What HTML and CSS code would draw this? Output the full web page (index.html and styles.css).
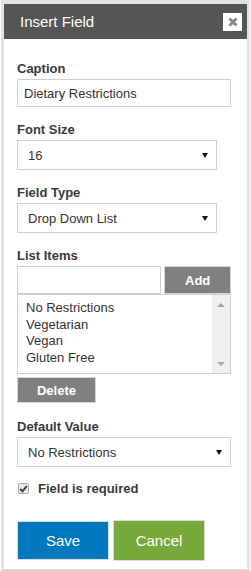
FILE: index.html
```html
<!DOCTYPE html>
<html>
<head>
<meta charset="utf-8">
<link rel="stylesheet" href="styles.css">
</head>
<body>
<div class="dialog">
  <div class="header">
    <span class="title">Insert Field</span>
    <span class="close"><svg width="10" height="10" viewBox="0 0 10 10"><path d="M1.5 1.5 L8.5 8.5 M8.5 1.5 L1.5 8.5" stroke="#8a8a8a" stroke-width="3"/></svg></span>
  </div>
  <div class="body">
    <div class="label first">Caption</div>
    <div class="input wide">Dietary Restrictions</div>

    <div class="label">Font Size</div>
    <div class="select narrow"><span>16</span><svg class="arrow" width="6" height="5" viewBox="0 0 6 5"><path d="M0 0 L6 0 L3 5 Z" fill="#111"/></svg></div>

    <div class="label">Field Type</div>
    <div class="select narrow"><span>Drop Down List</span><svg class="arrow" width="6" height="5" viewBox="0 0 6 5"><path d="M0 0 L6 0 L3 5 Z" fill="#111"/></svg></div>

    <div class="label">List Items</div>
    <div class="add-row">
      <div class="input item-input"></div>
      <div class="btn-gray add">Add</div>
    </div>
    <div class="listbox">
      <div class="items">
        <div>No Restrictions</div>
        <div>Vegetarian</div>
        <div>Vegan</div>
        <div>Gluten Free</div>
      </div>
      <div class="scroll">
        <svg width="8" height="4" viewBox="0 0 8 4"><path d="M0 4 L4 0 L8 4 Z" fill="#a8a8a8"/></svg>
        <svg width="8" height="4" viewBox="0 0 8 4"><path d="M0 0 L4 4 L8 0 Z" fill="#a8a8a8"/></svg>
      </div>
    </div>
    <div class="btn-gray delete">Delete</div>

    <div class="label">Default Value</div>
    <div class="select wide"><span>No Restrictions</span><svg class="arrow" width="6" height="5" viewBox="0 0 6 5"><path d="M0 0 L6 0 L3 5 Z" fill="#111"/></svg></div>

    <div class="check-row">
      <span class="checkbox"><svg width="9" height="8" viewBox="0 0 9 8"><path d="M1.2 4 L3.5 6.3 L7.8 1.2" stroke="#444" stroke-width="2" fill="none"/></svg></span>
      <span class="check-label">Field is required</span>
    </div>

    <div class="actions">
      <div class="btn save">Save</div>
      <div class="btn cancel">Cancel</div>
    </div>
  </div>
</div>
</body>
</html>
```
FILE: styles.css
```css
html, body {
  margin: 0;
  padding: 0;
  background: #ffffff;
}
body {
  font-family: "Liberation Sans", Arial, sans-serif;
  color: #333;
}
.dialog {
  width: 249px;
  height: 571px;
  box-sizing: border-box;
  margin-left: 1px;
  border: 3px solid #e2e2e2;
  border-top-width: 4px;
  border-bottom: 2px solid #d8d8d8;
  background: #fff;
}
.header {
  height: 35px;
  background: #555555;
  display: flex;
  align-items: center;
  justify-content: space-between;
  padding: 0 5px 0 16px;
}
.title {
  color: #fff;
  font-size: 15px;
}
.close {
  width: 19px;
  height: 18px;
  background: #fff;
  display: flex;
  align-items: center;
  justify-content: center;
}
.body {
  padding: 0 15px 0 13px;
}
.label {
  font-size: 13px;
  font-weight: bold;
  color: #3a3a3a;
  margin-top: 15px;
  margin-bottom: 3px;
  line-height: 15px;
}
.label.first {
  margin-top: 22px;
}
.input, .select {
  box-sizing: border-box;
  border: 1px solid #cfcfcf;
  height: 28px;
  font-size: 13px;
  display: flex;
  align-items: center;
  padding-left: 6px;
  color: #333;
}
.wide { width: 214px; }
.narrow { width: 200px; }
.select {
  justify-content: space-between;
  padding-left: 10px;
  padding-right: 8px;
  height: 30px;
}
.add-row {
  display: flex;
  gap: 3px;
  width: 214px;
}
.item-input {
  width: 145px;
  height: 28px;
}
.btn-gray {
  background: #808080;
  color: #fff;
  font-weight: bold;
  font-size: 13px;
  display: flex;
  align-items: center;
  justify-content: center;
  box-sizing: border-box;
  border: 1px solid #d6d6d6;
}
.add {
  width: 67px;
  height: 28px;
}
.listbox {
  box-sizing: border-box;
  width: 214px;
  height: 80px;
  border: 1px solid #cfcfcf;
  display: flex;
  justify-content: space-between;
}
.items {
  padding: 5px 0 0 8px;
  font-size: 13px;
  line-height: 16.5px;
  color: #333;
}
.scroll {
  width: 18px;
  background: #f0f0f0;
  display: flex;
  flex-direction: column;
  justify-content: space-between;
  align-items: center;
  padding: 8px 0 7px;
}
.delete {
  width: 79px;
  height: 26px;
  margin-top: 3px;
}
.delete + .label {
  margin-top: 16px;
}
.check-row {
  display: flex;
  align-items: center;
  margin-top: 14px;
  margin-left: 1px;
  line-height: 15px;
}
.checkbox {
  box-sizing: border-box;
  width: 11px;
  height: 11px;
  border: 1px solid #aaa;
  border-radius: 2px;
  background: #eaeaea;
  display: flex;
  align-items: center;
  justify-content: center;
}
.check-label {
  font-size: 13px;
  font-weight: bold;
  color: #3a3a3a;
  margin-left: 9px;
}
.actions {
  display: flex;
  gap: 4px;
  margin-top: 25px;
}
.btn {
  box-sizing: border-box;
  height: 39px;
  display: flex;
  align-items: center;
  justify-content: center;
  color: #fff;
  font-size: 15px;
  border: 1px solid #dcdcdc;
}
.save {
  width: 92px;
  background: #0078bd;
}
.cancel {
  width: 92px;
  height: 41px;
  margin-top: -1px;
  background: #77a83a;
}
```
